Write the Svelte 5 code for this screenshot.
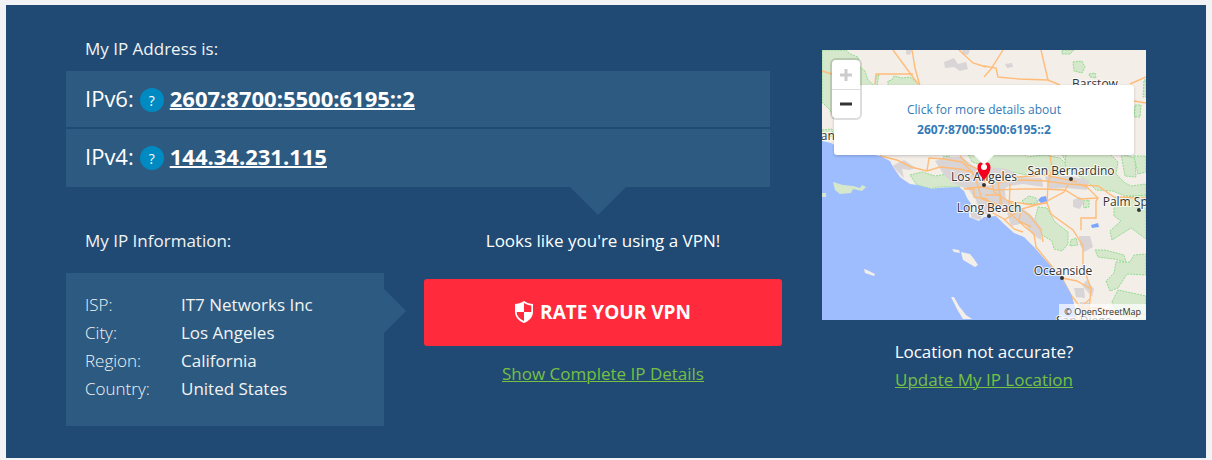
<script>
	const addresses = [
		{ label: 'IPv6:', value: '2607:8700:5500:6195::2', about: 'What is IPv6?' },
		{ label: 'IPv4:', value: '144.34.231.115', about: 'What is IPv4?' }
	];

	const info = [
		['ISP:', 'IT7 Networks Inc'],
		['City:', 'Los Angeles'],
		['Region:', 'California'],
		['Country:', 'United States']
	];

	const cities = [
		{ name: 'Barstow', x: 273, y: 38 },
		{ name: 'Los Angeles', x: 162, y: 131, dot: [162, 135] },
		{ name: 'San Bernardino', x: 249, y: 125, dot: [249, 129] },
		{ name: 'Long Beach', x: 167, y: 162, dot: [167, 166] },
		{ name: 'Palm Springs', x: 317, y: 156, dot: [317, 160] },
		{ name: 'Oceanside', x: 241, y: 225, dot: [240, 228] },
		{ name: 'Santa Barbara', x: 32, y: 90 },
		{ name: 'San Diego', x: 262, y: 275 }
	];

	const forests = [
		'M0 0H24L28 4L36 7L37 16L43 21L46 30L54 37H40L30 62L22 70L12 68L8 60L0 52Z',
		'M53 34L54 27L57 24L55 36H53Z',
		'M66 36V31L70 30L72 26L80 28L88 27L93 31L98 36Z',
		'M0 80L10 79L12 87L0 85Z',
		'M88 125L100 122L113 126L126 124L140 132L138 137L115 137L110 139L95 135Z',
		'M121 107L127 106L128 110L122 109Z',
		'M146 104H202L205 107L222 105L238 108L246 116L244 124L231 126L205 125L189 122L170 121L163 116L150 112Z',
		'M240 105L250 105L252 112L245 113Z',
		'M244 104H288L296 112L294 124L303 133L309 136L324 134V146L303 146L291 141L274 140L264 130L250 122L243 115Z',
		'M299 104L313 108L314 127L303 126Z',
		'M312 106H324V122L316 124Z',
		'M292 148L324 145V189L309 178L290 190L288 181L299 171L292 166Z',
		'M216 157L225 158L233 172L246 182L246 194L240 201L232 199L230 191L220 185L213 169Z',
		'M200 151L207 146L214 148L216 153L203 154Z',
		'M249 190L254 188L256 195L248 196Z',
		'M251 12L260 11L263 17L260 23L252 21Z',
		'M240 0H252L248 4L240 4Z',
		'M267 24L273 23L274 28L268 27Z',
		'M313 55L319 55L318 67L312 67Z',
		'M322 30H324V47H321Z',
		'M273 200L283 200L302 205L304 212L292 209L276 207Z',
		'M294 212L308 212L312 205L324 204V225L305 224L296 238L288 241L284 231L292 223Z',
		'M290 252L296 240L310 243L324 246V270L295 264Z',
		'M261 151L267 150L267 157L262 158Z'
	];

	const towns = [
		'M122 12L132 8L136 14L144 12L146 19L138 21L132 17L123 18Z',
		'M84 0H90L88 5L84 4ZM140 0H148L146 5L140 4Z',
		'M183 14L190 13L191 17L185 18Z',
		'M70 116L82 110L94 118L88 120L80 119L82 128L76 122Z',
		'M113 111L125 107L140 107L150 115L158 120L160 132L172 141L175 152L167 165L158 163L154 150L147 140L131 133L122 125Z',
		'M165 117L186 119L198 127L220 128L221 137L201 134L187 136L172 145Z',
		'M223 127L246 126L267 130L265 140L244 138L227 139Z',
		'M162 136L182 134L184 150L196 158L190 164L174 160Z',
		'M184 159L200 158L209 165L220 178L219 190L210 184L202 173L189 176Z',
		'M251 150L258 147L262 152L258 159L251 157Z',
		'M257 186L268 186L271 197L262 202L258 195Z',
		'M252 238L262 238L263 248L254 247Z',
		'M265 230L272 239L270 247L260 235Z',
		'M258 252L268 253L267 270L257 270Z',
		'M147 160L159 162L159 170L150 168Z'
	];

	const freeways = [
		'M71 0L96 34',
		'M90 0L93 18L98 36',
		'M53 34L54 24H91',
		'M137 0L151 13L164 17',
		'M162 16L174 18L176 27L197 29L226 30L238 35',
		'M219 0L226 30',
		'M181 0L169 19L162 27',
		'M308 34L324 27',
		'M312 51L324 53',
		'M0 21L13 25',
		'M58 106L75 110L89 117L105 121L118 117L138 119L150 122L158 131L177 132L200 130L224 131L246 134L276 136L292 147L324 148',
		'M105 121L107 108L122 109L140 112L150 122',
		'M138 106L146 115L160 121L173 127L196 127L223 125L255 132',
		'M150 122L155 133L160 149L174 154L188 163L203 177L212 184L214 197L227 213L240 228L249 245L255 270',
		'M145 138L160 137L173 140L199 139L220 139L243 140L258 149L276 148',
		'M142 139L152 139L152 147L165 149L171 163L182 169L192 179L201 182',
		'M160 121L169 129L172 142L186 151L200 159L221 153L242 142L246 135',
		'M186 151L210 155L225 153L229 164L251 180L261 196L261 216L269 239L267 260L275 270',
		'M225 153L226 134L230 119L228 105',
		'M182 170L199 160L207 165L219 180L221 192',
		'M199 159L197 171L209 177',
		'M259 180V168H274V151L276 148L265 137L257 134',
		'M240 228L255 231L269 239',
		'M249 245L259 258H279L296 265L324 264',
		'M257 270L260 256L268 249',
		'M163 145H178V157',
		'M176 133L180 155',
		'M188 134L187 163'
	];
</script>

<main>
	<div class="details">
		<section>
			<h2>My IP Address is:</h2>
			<div class="addresses">
				{#each addresses as { label, value, about }}
					<div class="address">
						<span>{label}</span>
						<button class="help" aria-label={about}>?</button>
						<a href="#details">{value}</a>
					</div>
				{/each}
			</div>
		</section>

		<div class="lower">
			<section>
				<h2>My IP Information:</h2>
				<table>
					<tbody>
						{#each info as [name, value]}
							<tr><th scope="row">{name}</th><td>{value}</td></tr>
						{/each}
					</tbody>
				</table>
			</section>

			<section class="vpn">
				<p>Looks like you're using a VPN!</p>
				<button class="rate">
					<svg width="18" height="22" viewBox="0 0 18 22" aria-hidden="true">
						<path fill="#fff" d="M9 0C12 2 15 3 18 3V11C18 16 14 20 9 22C4 20 0 16 0 11V3C3 3 6 2 9 0Z" />
						<path fill="#ff2a3b" d="M9 2C11.300 3.400 13.600 4.300 16.300 4.600V11H9ZM9 11V20C5.200 18.300 1.700 15.200 1.700 11Z" />
					</svg>
					RATE YOUR VPN
				</button>
				<a class="green" href="#complete">Show Complete IP Details</a>
			</section>
		</div>
	</div>

	<aside>
		<div class="map">
			<svg class="tiles" viewBox="0 0 324 270" preserveAspectRatio="xMidYMid slice" aria-hidden="true">
				<rect width="324" height="270" fill="#f4eee9" />
				<g class="forests">
					{#each forests as d}<path {d} />{/each}
				</g>
				<g fill="#d9d5d6">
					{#each towns as d}<path {d} />{/each}
				</g>
				<g class="roads">
					{#each freeways as d}<path {d} />{/each}
				</g>
				<g fill="#9dbdff">
					<path d="M0 91L9 93L14 96L30 100L58 106L68 111L71 117L78 127L82 130L88 134L95 135L110 139L115 138L137 137L142 141L145 148L150 155L147 161L147 167L157 171L162 167L174 166L182 174L192 183L202 187L212 197L225 212L240 228L249 244L254 261L254 270H0Z" />
				</g>
				<path fill="#7ba6ff" d="M216 150L219 147L224 146L225 151L219 153ZM269 175L276 173L277 177L270 178Z" />
				<g fill="#f4eee9">
					<path d="M130 199L137 200L138 203L132 202ZM139 202L148 204L152 209L156 215L153 217L141 210ZM42 219L45 220L53 224L52 226L43 223ZM129 247L132 247L137 256L144 265L150 269H141L136 261Z" />
				</g>
				<path fill="#d6e8cb" d="M11 132L21 135L31 136L38 138L40 135L44 137L40 141L31 139L29 143L18 144L13 140ZM0 143L4 143V147H0Z" />
				<g class="cities">
					{#each cities as { name, x, y, dot }}
						{#if dot}<circle cx={dot[0]} cy={dot[1]} r="2" />{/if}
						<text {x} {y}>{name}</text>
					{/each}
				</g>
				<path fill="#f5001d" d="M162 131C160 126 155.500 124 155.500 117C155.500 113 159 111 162 114C165 111 168.500 113 168.500 117C168.500 124 164 126 162 131Z" />
				<circle cx="162" cy="117" r="3" fill="#fff" />
			</svg>
			<a class="popup" href="#details">
				Click for more details about
				<strong>{addresses[0].value}</strong>
			</a>
			<div class="zoom">
				<button disabled aria-label="Zoom in">
					<svg width="12" height="12" viewBox="0 0 12 12"><path d="M0 6H12M6 0V12" /></svg>
				</button>
				<button aria-label="Zoom out">
					<svg width="12" height="12" viewBox="0 0 12 12"><path d="M0 6H12" /></svg>
				</button>
			</div>
			<small>© OpenStreetMap</small>
		</div>
		<p>Location not accurate?</p>
		<a class="green" href="#update">Update My IP Location</a>
	</aside>
</main>

<style>
	:global(body) {
		background: #f1f3f5;
		font: 17px/28px 'Open Sans', sans-serif;
		color: #fff;
	}

	main {
		display: grid;
		grid-template-columns: 1fr 324px;
		gap: 40px;
		margin: 5px 6px 2px;
		padding: 30px 60px 32px;
		background: #204a73;
	}

	h2, p {
		margin: 0;
		font-size: 17px;
		line-height: 28px;
		font-weight: 400;
	}

	h2 {
		padding-left: 19px;
		font-weight: 500;
		color: #f1f3f5;
	}

	button {
		border: 0;
		padding: 0;
		font-family: inherit;
		cursor: pointer;
	}

	.addresses {
		position: relative;
		margin: 8px 12px 0 0;
	}

	.addresses::after {
		content: '';
		position: absolute;
		top: 100%;
		right: 144px;
		border: 28px solid transparent;
		border-top-color: #2d5a80;
		border-bottom: 0;
	}

	.address {
		display: flex;
		align-items: center;
		gap: 6px;
		height: 56px;
		padding-left: 19px;
		background: #2d5a80;
		border-bottom: 2px solid #204a73;
		font-size: 22px;
	}

	.address:last-child {
		border-color: #2d5a80;
	}

	.address a, .address span {
		padding-bottom: 2px;
	}

	.address a {
		color: #fff;
		font-weight: 700;
		text-decoration-thickness: 2px;
	}

	.help {
		width: 24px;
		height: 24px;
		margin-top: 2px;
		border-radius: 50%;
		background: #008ac2;
		color: #fff;
		font-size: 14px;
	}

	.lower {
		display: grid;
		grid-template-columns: 318px 1fr;
		gap: 40px;
		margin-top: 40px;
	}

	.lower > section {
		position: relative;
	}

	table {
		width: 100%;
		margin-top: 18px;
		padding: 18px 19px 23px;
		background: #2d5a80;
		border-spacing: 0;
	}

	.lower > section:first-child::after {
		content: '';
		position: absolute;
		top: 62px;
		left: 100%;
		border: 22px solid transparent;
		border-left-color: #2d5a80;
		border-right: 0;
	}

	th, td {
		padding: 0;
		text-align: left;
		font-weight: 500;
		color: #f1f3f5;
	}

	th {
		width: 96px;
		font-weight: 300;
	}

	.vpn {
		text-align: center;
	}

	.rate {
		display: flex;
		align-items: center;
		justify-content: center;
		gap: 7px;
		width: 100%;
		height: 67px;
		margin: 24px 0 14px;
		padding-bottom: 2px;
		border-radius: 3px;
		background: #ff2a3b;
		color: #fff;
		font-size: 19px;
		font-weight: 700;
	}

	.green {
		color: #76c043;
		text-decoration-thickness: 1px;
	}

	aside {
		padding-top: 15px;
		text-align: center;
	}

	.map {
		position: relative;
		height: 270px;
		margin-bottom: 18px;
		overflow: hidden;
	}

	.tiles {
		display: block;
		width: 100%;
		height: 100%;
	}

	.forests {
		fill: #d6e8cb;
		stroke: #91db91;
		stroke-dasharray: 2 1;
	}

	.roads {
		fill: none;
		stroke: #ffbc78;
		stroke-width: 1.4;
	}

	.cities {
		fill: #333;
		font-size: 12px;
		font-weight: 500;
		text-anchor: middle;
	}

	.cities text {
		stroke: #ffffffcc;
		stroke-width: 2;
		paint-order: stroke;
	}

	.popup {
		position: absolute;
		top: 35px;
		left: 12px;
		right: 12px;
		padding: 15px 0;
		border-radius: 3px;
		background: #fff;
		box-shadow: 0 1px 3px #0003;
		color: #337ab7;
		font-size: 12px;
		line-height: 20px;
		text-decoration: none;
	}

	.popup::after {
		content: '';
		position: absolute;
		top: 100%;
		left: 50%;
		margin-left: -10px;
		border: 10px solid transparent;
		border-top-color: #fff;
		border-bottom: 0;
	}

	.popup strong {
		display: block;
	}

	.zoom {
		position: absolute;
		top: 8px;
		left: 8px;
		border: 2px solid #0002;
		border-radius: 6px;
		background: #fff;
		background-clip: padding-box;
	}

	.zoom button {
		display: grid;
		place-items: center;
		width: 28px;
		height: 29px;
		background: none;
		color: #333;
	}

	.zoom button + button {
		border-top: 1px solid #ddd;
	}

	.zoom button:disabled {
		color: #ccc;
	}

	.zoom path {
		stroke: currentColor;
		stroke-width: 3;
	}

	.map small {
		position: absolute;
		right: 0;
		bottom: 0;
		padding: 0 5px;
		background: #ffffffb3;
		color: #333;
		font-size: 9px;
		line-height: 16px;
	}
</style>
